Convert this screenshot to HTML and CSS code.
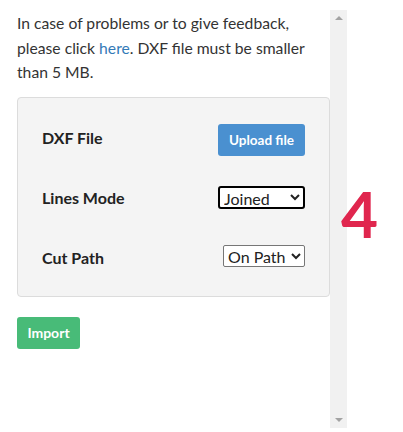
FILE: index.html
```html
<!DOCTYPE html>
<html lang="en">
<head>
  <meta charset="UTF-8" />
  <title>DXF Import</title>
  <meta name="viewport" content="width=device-width, initial-scale=1.0"/>
  <link rel="stylesheet" href="styles.css">
</head>
<body>
  <div class="layout">
    <div class="frame">
      <div class="content">
        <p class="intro">
          In case of problems or to give feedback, please click <a href="#">here</a>. DXF file must be smaller than 5 MB.
        </p>

        <div class="card">
          <div class="row">
            <span class="label">DXF File</span>
            <button class="upload">Upload file</button>
          </div>
          <div class="row">
            <span class="label">Lines Mode</span>
            <select class="mode">
              <option>Joined</option>
              <option>Separate</option>
            </select>
          </div>
          <div class="row">
            <span class="label">Cut Path</span>
            <select class="cut">
              <option>On Path</option>
              <option>Inside</option>
              <option>Outside</option>
            </select>
          </div>
        </div>

        <button class="import">Import</button>
      </div>

      <div class="scrollbar">
        <span class="arrow up"></span>
        <span class="arrow down"></span>
      </div>
    </div>

    <div class="step">4</div>
  </div>
</body>
</html>
```

FILE: styles.css
```css
body {
  margin: 0;
  font-family: 'Lato', 'Liberation Sans', sans-serif;
  color: #333;
  background-color: #ffffff;
}

.layout {
  display: flex;
  align-items: flex-start;
}

.frame {
  display: flex;
  margin-top: 10px;
  height: 418px;
}

.content {
  width: 313px;
  padding-left: 17px;
}

.intro {
  margin: 1px 0 12px 0;
  font-size: 15.7px;
  line-height: 24.5px;
}

.intro a {
  color: #337ab7;
  text-decoration: none;
}

.card {
  background-color: #f4f4f4;
  border: 1px solid #dcdcdc;
  border-radius: 4px;
  padding: 12px 24px 6px 24px;
}

.row {
  height: 60px;
  display: flex;
  justify-content: space-between;
  align-items: center;
}

.label {
  font-weight: 700;
  font-size: 16px;
  color: #222;
  margin-top: -4px;
}

.upload {
  width: 87px;
  height: 32px;
  margin-top: 1px;
  border: none;
  border-radius: 3px;
  background-color: #4a90d0;
  color: white;
  font-family: inherit;
  font-weight: 700;
  font-size: 13.5px;
  padding: 0;
}

select {
  font-family: inherit;
  font-size: 16px;
  color: #222;
  background-color: #fff;
  margin-top: -4px;
}

.mode {
  width: 87px;
  height: 23px;
  border: 2px solid #000;
  border-radius: 3px;
}

.cut {
  width: 82px;
  height: 22px;
  margin-top: -7px;
  border: 1px solid #767676;
  border-radius: 2px;
}

.import {
  margin-top: 20px;
  width: 63px;
  height: 32px;
  border: none;
  border-radius: 3px;
  background-color: #48bb78;
  color: white;
  font-family: inherit;
  font-weight: 700;
  font-size: 14px;
  padding: 0;
}

.scrollbar {
  width: 17px;
  background-color: #f1f1f1;
  display: flex;
  flex-direction: column;
  justify-content: space-between;
  align-items: center;
  padding: 6px 0;
  box-sizing: border-box;
}

.arrow {
  width: 0;
  height: 0;
  border-left: 4px solid transparent;
  border-right: 4px solid transparent;
}

.arrow.up {
  border-bottom: 4px solid #a3a3a3;
}

.arrow.down {
  border-top: 4px solid #a3a3a3;
}

.step {
  margin: 182px 0 0 -6px;
  font-size: 64px;
  font-weight: 700;
  color: #e0264e;
  line-height: 1;
}
```
